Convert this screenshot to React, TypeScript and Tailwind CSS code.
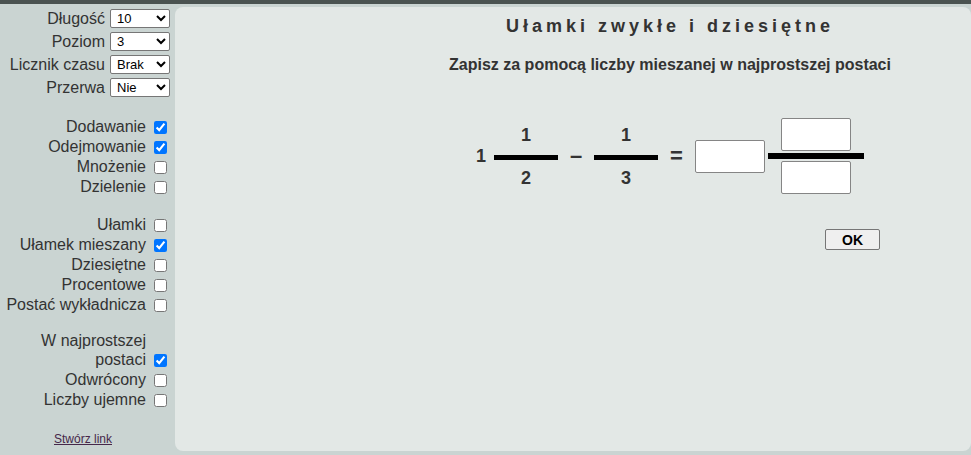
import React from 'react';

const font = { fontFamily: '"Liberation Sans", Arial, sans-serif' };

const SelectRow = ({ label, options, value }: { label: string; options: string[]; value: string }) => (
  <div className="flex h-[23px] items-center justify-end pr-[5px]">
    <span className="mr-[5px] text-[16px] leading-[18px]">{label}</span>
    <select
      defaultValue={value}
      className="h-[19px] w-[60px] rounded-[2px] border border-[#767676] bg-white pl-[2px] text-[13px] text-black"
    >
      {options.map((o) => (
        <option key={o}>{o}</option>
      ))}
    </select>
  </div>
);

const CheckRow = ({ label, checked = false }: { label: string; checked?: boolean }) => (
  <div className="flex h-[20px] items-center justify-end pr-[8px]">
    <span className="text-[16px] leading-[18px]">{label}</span>
    <input type="checkbox" defaultChecked={checked} className="m-0 ml-[8px] h-[13px] w-[13px]" />
  </div>
);

const Fraction = ({ top, bottom }: { top: string; bottom: string }) => (
  <div className="flex w-[64px] flex-col items-center">
    <span className="text-[18px] font-bold leading-[20px]">{top}</span>
    <div className="mt-[10px] h-[5px] w-full bg-black" />
    <span className="mt-[8px] text-[18px] font-bold leading-[20px]">{bottom}</span>
  </div>
);

const Box = () => (
  <input
    type="text"
    className="h-[33px] w-[70px] rounded-[2px] border border-[#858585] bg-white outline-none"
  />
);

export default function App() {
  return (
    <div className="flex h-[455px] w-[971px] flex-col overflow-hidden bg-[#cad4d2] text-[#333]" style={font}>
      <div className="h-[4px] shrink-0 bg-[#4b5351]" />
      <div className="flex min-h-0 flex-1">
        <aside className="flex w-[175px] shrink-0 flex-col pt-[3px]">
          <SelectRow label="Długość" options={['5', '10', '15', '20']} value="10" />
          <SelectRow label="Poziom" options={['1', '2', '3', '4', '5']} value="3" />
          <SelectRow label="Licznik czasu" options={['Brak', '1 min', '5 min']} value="Brak" />
          <SelectRow label="Przerwa" options={['Nie', 'Tak']} value="Nie" />

          <div className="mt-[18px]">
            <CheckRow label="Dodawanie" checked />
            <CheckRow label="Odejmowanie" checked />
            <CheckRow label="Mnożenie" />
            <CheckRow label="Dzielenie" />
          </div>

          <div className="mt-[18px]">
            <CheckRow label="Ułamki" />
            <CheckRow label="Ułamek mieszany" checked />
            <CheckRow label="Dziesiętne" />
            <CheckRow label="Procentowe" />
            <CheckRow label="Postać wykładnicza" />
          </div>

          <div className="mt-[17px]">
            <div className="flex h-[18px] items-center justify-end pr-[29px]">
              <span className="text-[16px] leading-[18px]">W najprostszej</span>
            </div>
            <CheckRow label="postaci" checked />
            <CheckRow label="Odwrócony" />
            <CheckRow label="Liczby ujemne" />
          </div>

          <div className="mt-[21px] pr-[9px] text-center leading-[14px]">
            <a href="#" className="text-[12px] text-[#46284a] underline">
              Stwórz link
            </a>
          </div>
        </aside>

        <main className="mb-[4px] mt-[3px] flex flex-1 flex-col rounded-lg bg-[#e3e8e6] pl-[194px]">
          <h1 className="mt-[9px] text-center text-[18px] font-bold leading-[21px] tracking-[4px]">
            Ułamki zwykłe i dziesiętne
          </h1>
          <p className="mt-[19px] text-center text-[16px] font-bold leading-[18px]">
            Zapisz za pomocą liczby mieszanej w najprostszej postaci
          </p>

          <div className="ml-[107px] mt-[44px] flex items-center self-start">
            <span className="w-[18px] text-[18px] font-bold leading-[20px]">1</span>
            <Fraction top="1" bottom="2" />
            <span className="w-[36px] text-center text-[22px] font-bold leading-[20px]">–</span>
            <Fraction top="1" bottom="3" />
            <span className="w-[37px] text-center text-[22px] font-bold leading-[20px]">=</span>
            <Box />
            <div className="ml-[3px] flex w-[96px] flex-col items-center gap-[2px]">
              <Box />
              <div className="h-[6px] w-full bg-black" />
              <Box />
            </div>
          </div>

          <button className="ml-[456px] mt-[35px] h-[21px] w-[55px] self-start rounded-[2px] border border-[#767676] bg-[#efefef] text-[14px] font-bold text-black">
            OK
          </button>
        </main>
      </div>
    </div>
  );
}
